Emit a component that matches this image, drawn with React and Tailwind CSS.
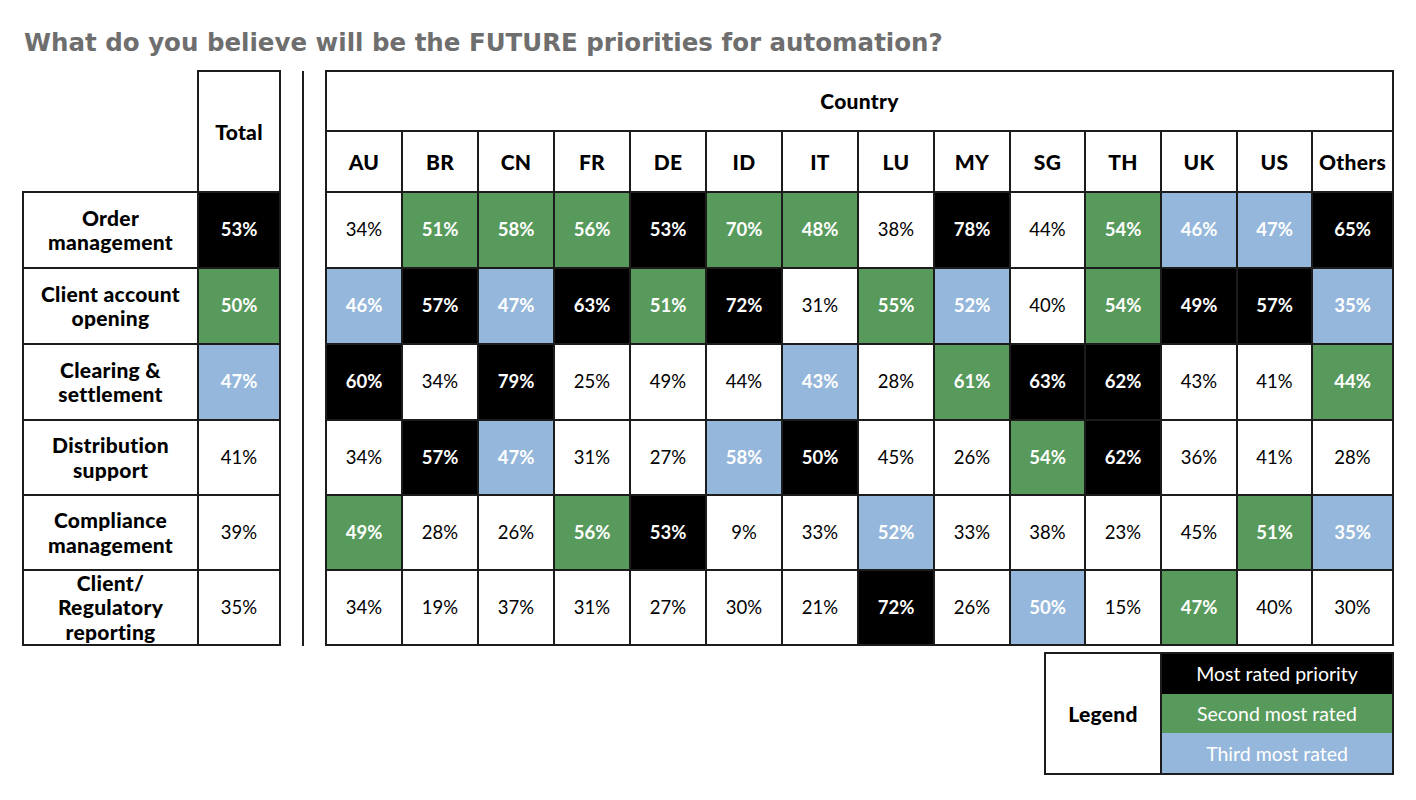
import React from "react";

const countries = ["AU", "BR", "CN", "FR", "DE", "ID", "IT", "LU", "MY", "SG", "TH", "UK", "US", "Others"];

// k = most rated, g = second, b = third, w = plain
const rows = [
  { label: ["Order", "management"], total: [53, "k"], values: "34w 51g 58g 56g 53k 70g 48g 38w 78k 44w 54g 46b 47b 65k" },
  { label: ["Client account", "opening"], total: [50, "g"], values: "46b 57k 47b 63k 51g 72k 31w 55g 52b 40w 54g 49k 57k 35b" },
  { label: ["Clearing &", "settlement"], total: [47, "b"], values: "60k 34w 79k 25w 49w 44w 43b 28w 61g 63k 62k 43w 41w 44g" },
  { label: ["Distribution", "support"], total: [41, "w"], values: "34w 57k 47b 31w 27w 58b 50k 45w 26w 54g 62k 36w 41w 28w" },
  { label: ["Compliance", "management"], total: [39, "w"], values: "49g 28w 26w 56g 53k 9w 33w 52b 33w 38w 23w 45w 51g 35b" },
  { label: ["Client/", "Regulatory", "reporting"], total: [35, "w"], values: "34w 19w 37w 31w 27w 30w 21w 72k 26w 50b 15w 47g 40w 30w" }
];

// heights include the 2px bottom border
const rowHeights = ["h-[76px]", "h-[76px]", "h-[76px]", "h-[75px]", "h-[75px]", "h-[75px]"];

const tone = {
  k: "bg-black text-white font-bold",
  g: "bg-[#589a5c] text-white font-bold",
  b: "bg-[#95b7db] text-white font-bold",
  w: "bg-white text-black"
};

const heading = "text-[21px] font-black tracking-[0.3px]";

const parse = (text) => text.split(" ").map((item) => ({ value: item.slice(0, -1), kind: item.slice(-1) }));

function Cell({ kind, value, height }) {
  return (
    <div className={`${height} ${tone[kind]} flex items-center justify-center border-r-2 border-b-2 border-[#1c1c1c] text-[18.5px]`}>
      {value}%
    </div>
  );
}

export default function App() {
  return (
    <div className="h-[800px] w-[1416px] bg-white text-black" style={{ fontFamily: "Lato, 'Open Sans', sans-serif" }}>
      <h1 className="pl-[24px] pt-[28px] text-[24.5px] font-bold leading-[30px] text-[#6e6e6e]" style={{ fontFamily: "'DejaVu Sans', Verdana, sans-serif" }}>
        What do you believe will be the FUTURE priorities for automation?
      </h1>

      <div className="mt-[12px] flex pl-[22px]">
        <div className="flex flex-col">
          <div className="flex">
            <div className="w-[175px]" />
            <div className={`flex h-[121px] w-[84px] items-center justify-center border-x-2 border-t-2 border-[#1c1c1c] ${heading}`}>
              Total
            </div>
          </div>
          <div className="grid grid-cols-[175px_82px] border-l-2 border-t-2 border-[#1c1c1c]">
            {rows.map((row, i) => (
              <React.Fragment key={row.label.join(" ")}>
                <div className={`${rowHeights[i]} flex flex-col items-center justify-center border-r-2 border-b-2 border-[#1c1c1c] text-center leading-[24.5px] ${heading}`}>
                  {row.label.map((line) => (
                    <span key={line}>{line}</span>
                  ))}
                </div>
                <Cell kind={row.total[1]} value={row.total[0]} height={rowHeights[i]} />
              </React.Fragment>
            ))}
          </div>
        </div>

        <div className="ml-[21px] mt-[1px] h-[575px] w-[2px] bg-[#1c1c1c]" />

        <div className="ml-[21px] flex flex-col">
          <div className="border-l-2 border-t-2 border-[#1c1c1c]">
            <div className={`flex h-[60px] items-center justify-center border-r-2 border-b-2 border-[#1c1c1c] ${heading}`}>
              Country
            </div>
            <div className="grid grid-cols-[76px_76px_76px_76px_76px_76px_76px_76px_76px_75px_76px_76px_75px_81px]">
              {countries.map((name) => (
                <div key={name} className={`flex h-[61px] items-center justify-center border-r-2 border-b-2 border-[#1c1c1c] ${heading}`}>
                  {name}
                </div>
              ))}
              {rows.map((row, i) =>
                parse(row.values).map((cell, j) => (
                  <Cell key={`${i}-${j}`} kind={cell.kind} value={cell.value} height={rowHeights[i]} />
                ))
              )}
            </div>
          </div>

          <div className="mt-[6px] flex justify-end">
            <div className="flex h-[123px] w-[350px] border-2 border-[#1c1c1c]">
              <div className={`flex w-[116px] items-center justify-center border-r-2 border-[#1c1c1c] ${heading}`}>
                Legend
              </div>
              <div className="flex flex-1 flex-col text-[19.5px] text-white">
                <div className="flex flex-1 items-center justify-center bg-black">Most rated priority</div>
                <div className="flex flex-1 items-center justify-center bg-[#589a5c]">Second most rated</div>
                <div className="flex flex-1 items-center justify-center bg-[#95b7db]">Third most rated</div>
              </div>
            </div>
          </div>
        </div>
      </div>
    </div>
  );
}
